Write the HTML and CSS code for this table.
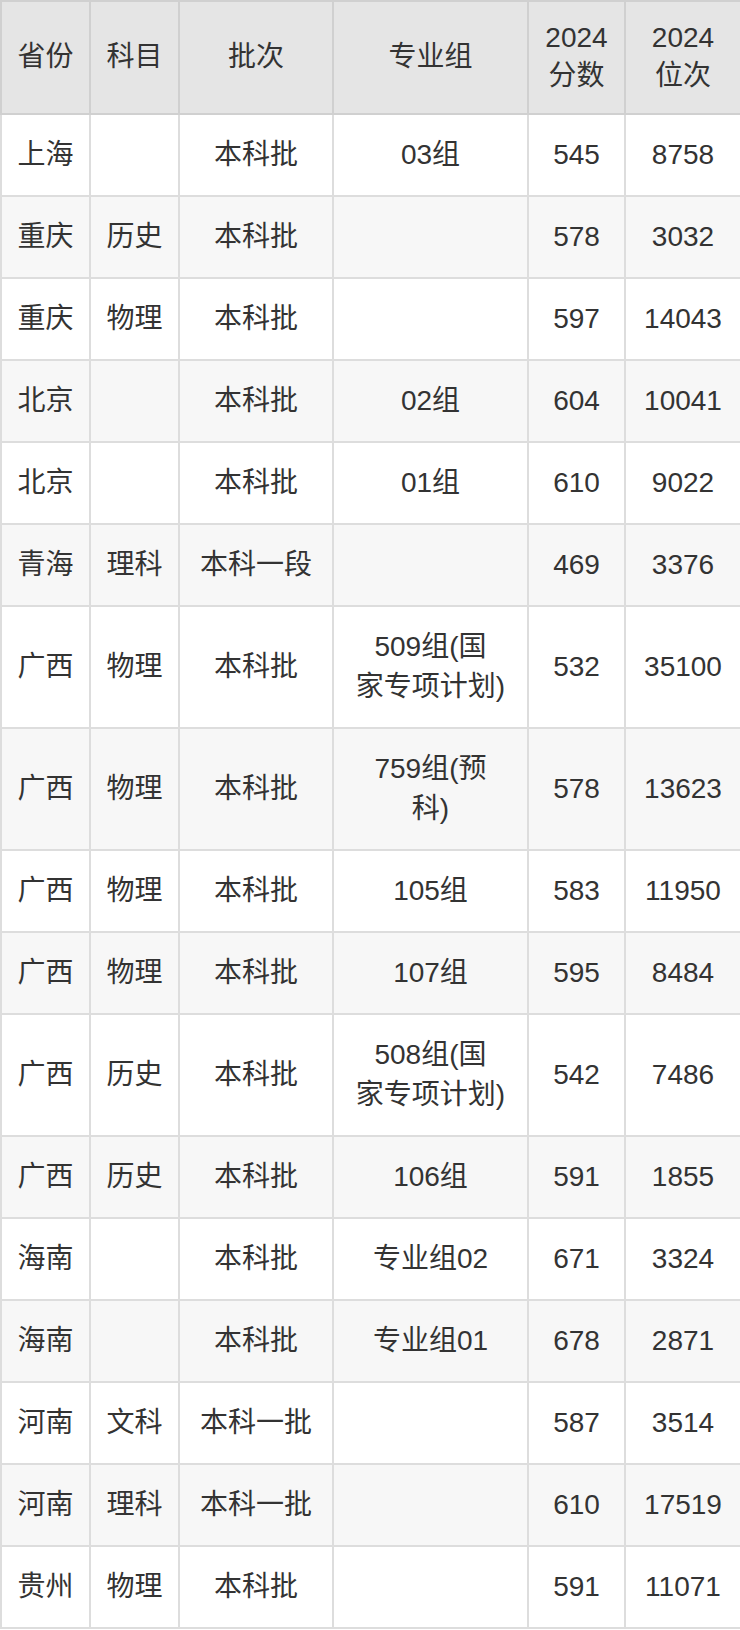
FILE: index.html
```html
<!DOCTYPE html>
<html lang="zh-CN">
<head>
<meta charset="utf-8">
<title>2024 分数位次</title>
<link rel="stylesheet" href="styles.css">
</head>
<body>
<table class="score-table">
  <colgroup>
    <col class="c-prov">
    <col class="c-subj">
    <col class="c-batch">
    <col class="c-group">
    <col class="c-score">
    <col class="c-rank">
  </colgroup>
  <thead>
    <tr><th>省份</th><th>科目</th><th>批次</th><th>专业组</th><th>2024<br>分数</th><th>2024<br>位次</th></tr>
  </thead>
  <tbody>
    <tr><td>上海</td><td></td><td>本科批</td><td>03组</td><td>545</td><td>8758</td></tr>
    <tr><td>重庆</td><td>历史</td><td>本科批</td><td></td><td>578</td><td>3032</td></tr>
    <tr><td>重庆</td><td>物理</td><td>本科批</td><td></td><td>597</td><td>14043</td></tr>
    <tr><td>北京</td><td></td><td>本科批</td><td>02组</td><td>604</td><td>10041</td></tr>
    <tr><td>北京</td><td></td><td>本科批</td><td>01组</td><td>610</td><td>9022</td></tr>
    <tr><td>青海</td><td>理科</td><td>本科一段</td><td></td><td>469</td><td>3376</td></tr>
    <tr><td>广西</td><td>物理</td><td>本科批</td><td>509组(国<br>家专项计划)</td><td>532</td><td>35100</td></tr>
    <tr><td>广西</td><td>物理</td><td>本科批</td><td>759组(预<br>科)</td><td>578</td><td>13623</td></tr>
    <tr><td>广西</td><td>物理</td><td>本科批</td><td>105组</td><td>583</td><td>11950</td></tr>
    <tr><td>广西</td><td>物理</td><td>本科批</td><td>107组</td><td>595</td><td>8484</td></tr>
    <tr><td>广西</td><td>历史</td><td>本科批</td><td>508组(国<br>家专项计划)</td><td>542</td><td>7486</td></tr>
    <tr><td>广西</td><td>历史</td><td>本科批</td><td>106组</td><td>591</td><td>1855</td></tr>
    <tr><td>海南</td><td></td><td>本科批</td><td>专业组02</td><td>671</td><td>3324</td></tr>
    <tr><td>海南</td><td></td><td>本科批</td><td>专业组01</td><td>678</td><td>2871</td></tr>
    <tr><td>河南</td><td>文科</td><td>本科一批</td><td></td><td>587</td><td>3514</td></tr>
    <tr><td>河南</td><td>理科</td><td>本科一批</td><td></td><td>610</td><td>17519</td></tr>
    <tr><td>贵州</td><td>物理</td><td>本科批</td><td></td><td>591</td><td>11071</td></tr>
  </tbody>
</table>
</body>
</html>
```
FILE: styles.css
```css
html, body {
  margin: 0;
  padding: 0;
  background: #ffffff;
}

.score-table {
  border-collapse: collapse;
  table-layout: fixed;
  width: 740px;
  font-family: "Liberation Sans", "Noto Sans CJK SC", sans-serif;
  font-size: 28px;
  color: #333333;
}

.c-prov { width: 89px; }
.c-subj { width: 89px; }
.c-batch { width: 154px; }
.c-group { width: 195px; }
.c-score { width: 97px; }
.c-rank { width: 116px; }

.score-table th,
.score-table td {
  border: 2px solid #dddddd;
  text-align: center;
  vertical-align: middle;
  padding: 20px 2px;
  line-height: 40px;
  font-weight: normal;
}

.score-table th {
  background: #e5e5e5;
  border-color: #d0d0d0;
  line-height: 38px;
  padding: 17px 2px 18px;
}

.score-table tbody tr:nth-child(even) td {
  background: #f7f7f7;
}
```
